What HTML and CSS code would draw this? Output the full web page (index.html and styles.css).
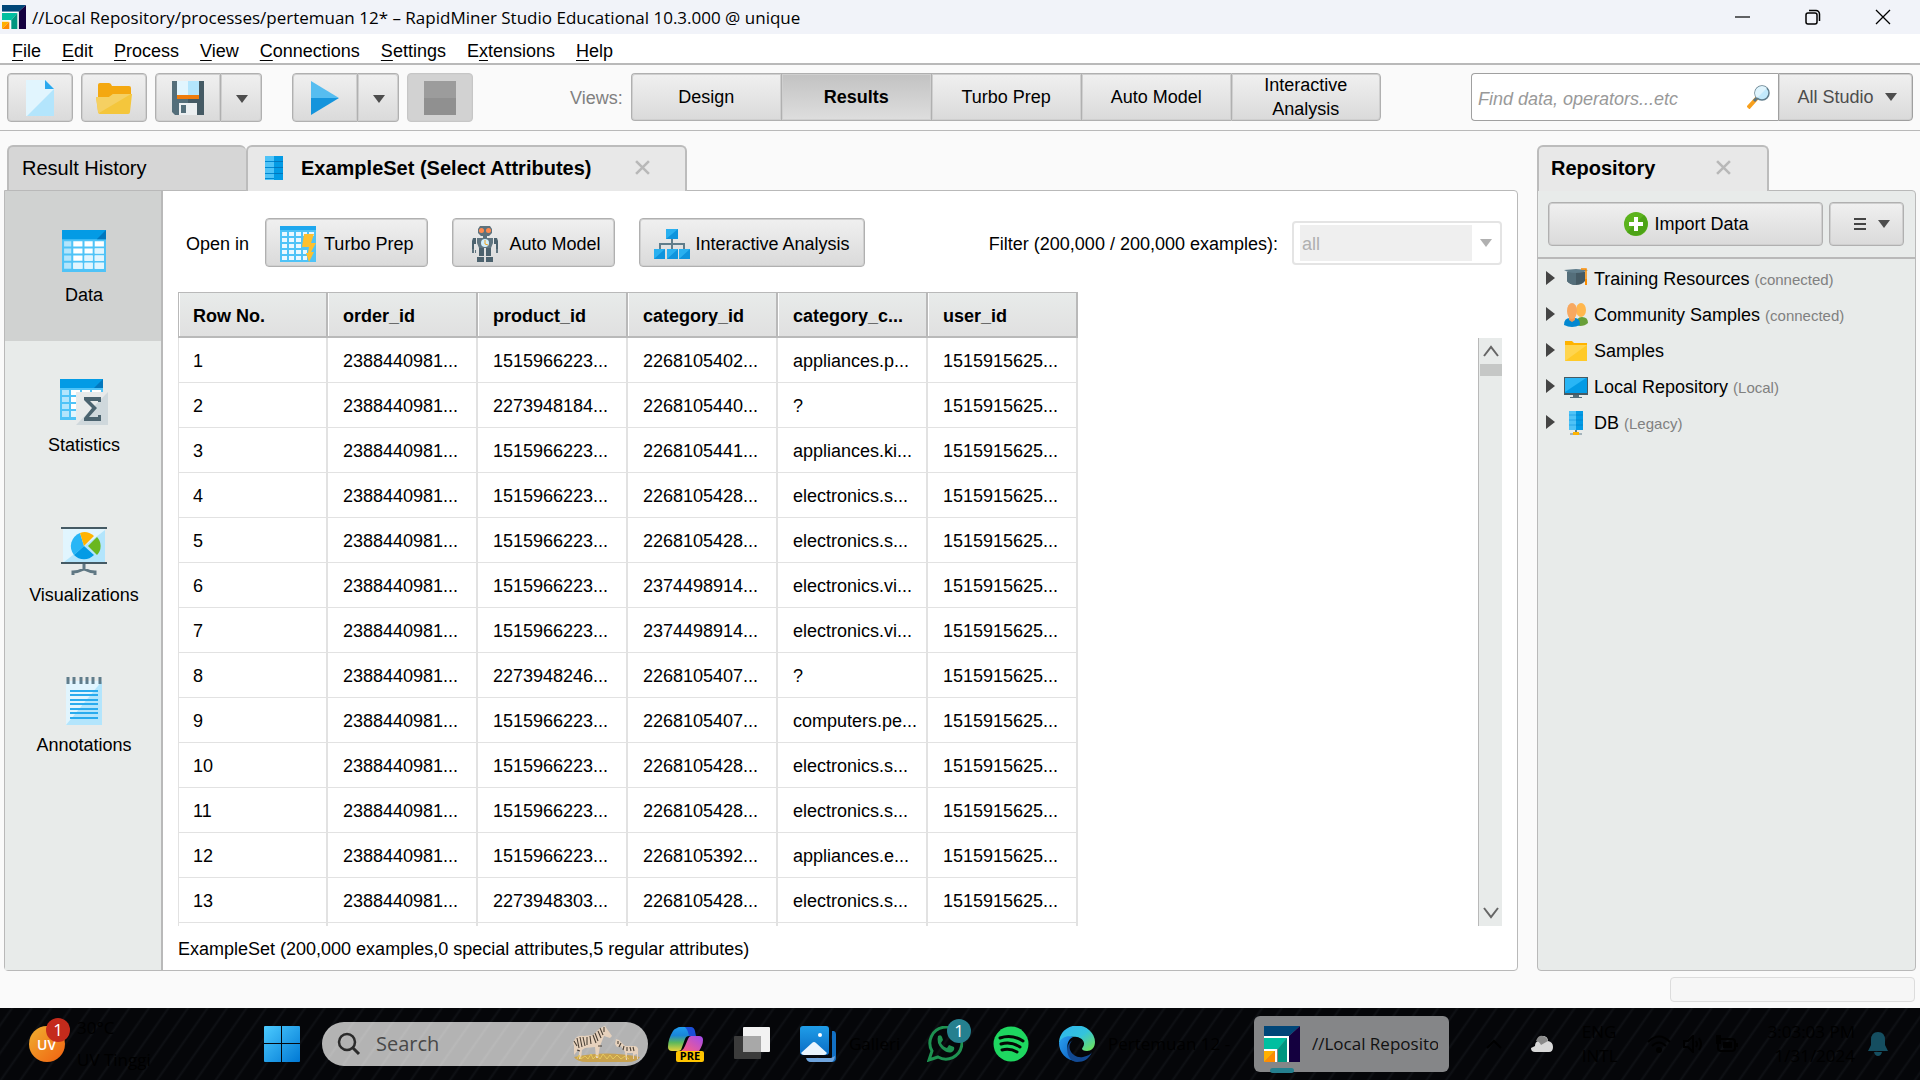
FILE: index.html
```html
<!DOCTYPE html>
<html lang="en">
<head>
    <meta charset="UTF-8">
    <meta name="viewport" content="width=device-width, initial-scale=1.0">
    <title>RapidMiner Studio Educational</title>
    <link rel="stylesheet" href="styles.css">
</head>
<body>

<!-- Shared shapes -->
<svg class="defs" width="0" height="0" aria-hidden="true">
    <defs>
        <linearGradient id="winGrad" x1="0" y1="0" x2="1" y2="1">
            <stop offset="0" stop-color="#4ccbff"/>
            <stop offset="1" stop-color="#0078d4"/>
        </linearGradient>
        <linearGradient id="copLeft" x1="0" y1="0" x2="0" y2="1">
            <stop offset="0" stop-color="#1f9cf0"/>
            <stop offset="0.35" stop-color="#1a86d8"/>
            <stop offset="0.65" stop-color="#5cb85c"/>
            <stop offset="1" stop-color="#e8d33a"/>
        </linearGradient>
        <linearGradient id="copRight" x1="1" y1="0" x2="0" y2="1">
            <stop offset="0" stop-color="#a14bf0"/>
            <stop offset="1" stop-color="#ff5f7e"/>
        </linearGradient>
        <linearGradient id="uvGrad" x1="0" y1="0" x2="1" y2="1">
            <stop offset="0" stop-color="#f0b030"/>
            <stop offset="1" stop-color="#f06010"/>
        </linearGradient>
        <linearGradient id="edgeTop" x1="0" y1="0" x2="1" y2="1">
            <stop offset="0" stop-color="#2fb4f0"/>
            <stop offset="0.5" stop-color="#33c3dd"/>
            <stop offset="1" stop-color="#76e64a"/>
        </linearGradient>
        <linearGradient id="edgeLow" x1="0" y1="0" x2="1" y2="1">
            <stop offset="0" stop-color="#2aa0f0"/>
            <stop offset="1" stop-color="#0b5cc0"/>
        </linearGradient>
        <linearGradient id="photoGrad" x1="0" y1="0" x2="0" y2="1">
            <stop offset="0" stop-color="#1f9de8"/>
            <stop offset="1" stop-color="#0a6cc4"/>
        </linearGradient>
        <symbol id="logo" viewBox="0 0 36 36">
            <path d="M0 0h36L25 10H0z" fill="#004678"/>
            <path d="M36 0v36H25V10z" fill="#14003f"/>
            <path d="M0 10h25v26h-2V12H0z" fill="#fff"/>
            <path d="M0 12h23l-9 11H0z" fill="#00bfa0"/>
            <path d="M23 12v24h-9V23z" fill="#009680"/>
            <path d="M0 23h13v13h-2V25H0z" fill="#fff"/>
            <path d="M0 25h11L0 36z" fill="#ffb000"/>
            <path d="M11 25v11H0z" fill="#ff8a00"/>
        </symbol>
        <symbol id="close" viewBox="0 0 14 14">
            <path d="M1 1l12 12M13 1L1 13" stroke="#b8b8b8" stroke-width="2.4" fill="none"/>
        </symbol>
        <symbol id="grid" viewBox="0 0 43 41">
            <path d="M0 1h43v40H0z" fill="#4fc3f7"/>
            <path d="M0 0h43v9H0z" fill="#039be5"/>
            <path d="M43 0v9h-9z" fill="#0277bd"/>
            <path d="M2 11h7v5H2zM2 18h7v5H2zM2 25h7v5H2zM2 32h7v6H2z" fill="#b3e5fc"/>
            <path d="M11 11h9v5h-9zM22 11h8v5h-8zM32 11h9v5h-9zM11 18h9v5h-9zM22 18h8v5h-8zM32 18h9v5h-9zM11 25h9v5h-9zM22 25h8v5h-8zM32 25h9v5h-9zM11 32h9v6h-9zM22 32h8v6h-8zM32 32h9v6h-9z" fill="#fff"/>
            <path d="M32 18h9v5h-9zM22 25h8v5h-8zM32 25h9v5h-9zM11 32h9v6h-9zM22 32h8v6h-8zM32 32h9v6h-9z" fill="#e1f5fe"/>
        </symbol>
    </defs>
</svg>

<header class="titlebar">
    <svg class="title-logo"><use href="#logo"/></svg>
    <h1>//Local Repository/processes/pertemuan 12* – RapidMiner Studio Educational 10.3.000 @ unique</h1>
    <div class="window-controls">
        <button type="button" aria-label="Minimize"><svg width="16" height="16" viewBox="0 0 16 16"><path d="M0 8h15" stroke="#000" stroke-width="1.2"/></svg></button>
        <button type="button" aria-label="Restore"><svg width="16" height="16" viewBox="0 0 16 16" fill="none" stroke="#000" stroke-width="1.5"><rect x="1" y="4" width="11" height="11" rx="2"/><path d="M4 1.500h7a3.500 3.500 0 0 1 3.500 3.500v7"/></svg></button>
        <button type="button" aria-label="Close"><svg width="16" height="16" viewBox="0 0 16 16"><path d="M1 1l14 14M15 1L1 15" stroke="#000" stroke-width="1.3"/></svg></button>
    </div>
</header>

<nav class="menubar">
    <a href="#"><u>F</u>ile</a>
    <a href="#"><u>E</u>dit</a>
    <a href="#"><u>P</u>rocess</a>
    <a href="#"><u>V</u>iew</a>
    <a href="#"><u>C</u>onnections</a>
    <a href="#"><u>S</u>ettings</a>
    <a href="#">E<u>x</u>tensions</a>
    <a href="#"><u>H</u>elp</a>
</nav>

<div class="toolbar">
    <div class="tools">
        <button type="button" class="btn tool" aria-label="New process">
            <svg width="28" height="36" viewBox="0 0 28 36"><path d="M0 0h19l9 9v27H0z" fill="#b3e5fc"/><path d="M0 0h19l9 9L1 36H0z" fill="#e1f5fe"/><path d="M19 0v9h9z" fill="#29a8ee"/></svg>
        </button>
        <button type="button" class="btn tool" aria-label="Open process">
            <svg width="36" height="32" viewBox="0 0 36 32"><path d="M2 3q0-2 2-2h9q2 0 3 3h17q2 0 2 2v12H2z" fill="#f4a810"/><path d="M0 15h13l4-3h19l-2 18q0 2-2 2H4q-2 0-2-2z" fill="#f4c63c"/><path d="M0 15h13l4-3h18L3 31q-1 0-1-2z" fill="#f5d062"/></svg>
        </button>
        <div class="split">
            <button type="button" class="btn tool" aria-label="Save process">
                <svg width="32" height="34" viewBox="0 0 32 34"><path d="M0 0h32v34H3l-3-3z" fill="#546e7a"/><path d="M16 0h16v34H16z" fill="#455a64"/><path d="M5 0h22v14H5z" fill="#e1f5fe"/><path d="M16 0h11v14H16z" fill="#b3e5fc"/><path d="M5 14h22v4H5z" fill="#ef7c0c"/><path d="M7 22h18v12H7z" fill="#eceff1"/><path d="M9 24h5v8H9z" fill="#546e7a"/></svg>
            </button>
            <button type="button" class="btn drop" aria-label="Save options"><span class="caret"></span></button>
        </div>
        <div class="split run">
            <button type="button" class="btn tool" aria-label="Run">
                <svg width="28" height="34" viewBox="0 0 28 34"><path d="M0 0l28 17H0z" fill="#56bdf0"/><path d="M0 34l28-17H0z" fill="#1494dc"/></svg>
            </button>
            <button type="button" class="btn drop" aria-label="Run options"><span class="caret"></span></button>
        </div>
        <button type="button" class="btn tool stop" aria-label="Stop" disabled>
            <svg width="32" height="34" viewBox="0 0 32 34"><path d="M0 0h32v17H0z" fill="#9c9c9c"/><path d="M0 17h32v17H0z" fill="#909090"/></svg>
        </button>
    </div>

    <div class="views">
        <span class="views-label">Views:</span>
        <div class="view-group">
            <button type="button" class="btn view">Design</button>
            <button type="button" class="btn view current">Results</button>
            <button type="button" class="btn view">Turbo Prep</button>
            <button type="button" class="btn view">Auto Model</button>
            <button type="button" class="btn view">Interactive Analysis</button>
        </div>
    </div>

    <div class="finder">
        <label class="find-box">
            <input type="search" placeholder="Find data, operators...etc" aria-label="Find data, operators">
            <svg width="24" height="24" viewBox="0 0 24 24"><path d="M1 23L10 13" stroke="#f8a01c" stroke-width="4"/><path d="M7 16l4-4" stroke="#5f7682" stroke-width="3"/><circle cx="15" cy="8" r="7" fill="#c3eafc" stroke="#607d8b" stroke-width="1.500"/><path d="M20 3L10 13a7 7 0 0 1 10-10z" fill="#dff4fd"/></svg>
        </label>
        <button type="button" class="btn studio">All Studio <span class="caret"></span></button>
    </div>
</div>

<main class="workspace">
    <section class="results">
        <div class="tabs">
            <div class="tab history">Result History</div>
            <div class="tab active example">
                <svg width="18" height="24" viewBox="0 0 18 24"><path d="M0 0h9v24H0z" fill="#4fc3f7"/><path d="M9 0h9v24H9z" fill="#039be5"/><path d="M0 5h9v1H0zM0 11h9v1H0zM0 17h9v1H0zM0 22h9v1H0z" fill="#0288d1"/><path d="M9 5h9v1H9zM9 11h9v1H9zM9 17h9v1H9z" fill="#0277bd"/></svg>
                <span>ExampleSet (Select Attributes)</span>
                <button type="button" class="tab-close" aria-label="Close tab"><svg><use href="#close"/></svg></button>
            </div>
        </div>

        <div class="panel results-panel">
            <nav class="sidebar">
                <button type="button" class="side-item selected">
                    <svg width="44" height="48" viewBox="0 -3 43 47"><use href="#grid" width="43" height="41"/></svg>
                    Data
                </button>
                <button type="button" class="side-item">
                    <svg width="48" height="48" viewBox="0 -2 48 48"><use href="#grid" width="43" height="41"/><path d="M16 13h32v33H16z" fill="#e8eaea"/><path d="M48 13v33H16z" fill="#cfd8dc"/><path d="M24 18h17v5h-3v-1h-8l7 7-8 9h9v-2h3v6H24v-3l8-10-8-8z" fill="#4b636f"/></svg>
                    Statistics
                </button>
                <button type="button" class="side-item">
                    <svg width="46" height="48" viewBox="0 0 46 48"><path d="M2 2h42v33H2z" fill="#e1f5fe"/><path d="M44 3v32H3z" fill="#b3e5fc"/><path d="M0 0h46v2H0zM0 35h46v2H0z" fill="#455a64"/><path d="M23 37v6M23 42q-6 3-11 3v3M23 42q6 3 11 3v3" stroke="#5f7783" stroke-width="3" fill="none"/><path d="M23 19l-4-13a14 14 0 0 0-6 22z" fill="#29b6f6"/><path d="M23 19L13 28a14 14 0 0 0 20 0z" fill="#039be5"/><path d="M23 19L19 6q7-3 14 3z" fill="#ffb300"/><path d="M27 19l9-9a13 13 0 0 1 0 18z" fill="#6ab71f"/></svg>
                    Visualizations
                </button>
                <button type="button" class="side-item">
                    <svg width="36" height="48" viewBox="0 0 36 48"><path d="M0 4h36v44H0z" fill="#e1f5fe"/><path d="M36 4v44H0z" fill="#b3e5fc"/><path d="M2 0v7M8 0v7M15 0v7M21 0v7M27 0v7M34 0v7" stroke="#607d8b" stroke-width="3"/><path d="M4 14h28M4 18h28M4 23h28M4 27h28M4 32h28M4 36h28M4 41h28" stroke="#29abee" stroke-width="2"/></svg>
                    Annotations
                </button>
            </nav>

            <div class="data-view">
                <div class="openbar">
                    <span>Open in</span>
                    <button type="button" class="btn open-btn">
                        <svg width="36" height="36" viewBox="0 0 36 36"><path d="M0 0h36v36H0z" fill="#4fc3f7"/><path d="M0 0h36v4H0z" fill="#1ea7ee"/><path d="M2 6h5v4H2zM9 6h5v4H9zM16 6h5v4h-5zM23 6h4v4h-4zM29 6h5v4h-5zM2 12h5v4H2zM9 12h5v4H9zM16 12h5v4h-5zM2 18h5v4H2zM9 18h5v4H9zM16 18h5v4h-5zM2 24h5v4H2zM9 24h5v4H9zM16 24h5v4h-5zM23 24h4v4h-4zM2 30h5v4H2zM9 30h5v4H9zM16 30h5v4h-5zM23 30h4v4h-4z" fill="#eaf8ff"/><path d="M24 8h10l-3 9h5l-5 9h3l-5 10-3-9h2l1-6h-7z" fill="#fdc02f"/></svg>
                        Turbo Prep
                    </button>
                    <button type="button" class="btn open-btn robot">
                        <svg width="26" height="36" viewBox="0 0 26 36"><path d="M8 0h10l2 3v4l-3 3H9L6 7V3zM11 9h4v3h-4z" fill="#5d727d"/><path d="M5 12h16v5l-2 5H7l-2-5z" fill="#607580"/><path d="M1 12h3v6H2v6H0v-9zM25 12h-3v6h2v6h2v-9zM7 22h5v8H7zM14 22h5v8h-5zM5 31h7v5H5zM14 31h7v5h-7z" fill="#4c626e"/><path d="M0 23h2v4H0zM3 24h1v3H3zM24 23h2v4h-2z" fill="#607580"/><circle cx="9.500" cy="4.500" r="2.500" fill="#ff8a50"/><circle cx="16.500" cy="4.500" r="2.500" fill="#ff8a50"/><circle cx="13" cy="17" r="4" fill="#cfeefc"/><path d="M13 14v4l3 1" stroke="#f4a21c" fill="none"/></svg>
                        Auto Model
                    </button>
                    <button type="button" class="btn open-btn analysis">
                        <svg width="36" height="30" viewBox="0 0 36 30"><path d="M18 10v11M6 21v-6h24v6" stroke="#607d8b" stroke-width="2" fill="none"/><path d="M12 0h12v10H12zM0 20h11v10H0zM13 20h11v10H13zM25 20h11v10H25z" fill="#29b0f0"/><path d="M24 0v10H12zM11 20v10H0zM24 20v10H13zM36 20v10H25z" fill="#0f94dd"/></svg>
                        Interactive Analysis
                    </button>
                    <label class="filter-label" for="filter">Filter (200,000 / 200,000 examples):</label>
                    <div class="filter">
                        <select id="filter" disabled>
                            <option>all</option>
                        </select>
                        <span class="caret"></span>
                    </div>
                </div>

                <div class="table-area">
                    <div class="table-clip">
                        <table>
                            <thead>
                                <tr><th>Row No.</th><th>order_id</th><th>product_id</th><th>category_id</th><th>category_c...</th><th>user_id</th></tr>
                            </thead>
                            <tbody>
                                <tr><td>1</td><td>2388440981...</td><td>1515966223...</td><td>2268105402...</td><td>appliances.p...</td><td>1515915625...</td></tr>
                                <tr><td>2</td><td>2388440981...</td><td>2273948184...</td><td>2268105440...</td><td>?</td><td>1515915625...</td></tr>
                                <tr><td>3</td><td>2388440981...</td><td>1515966223...</td><td>2268105441...</td><td>appliances.ki...</td><td>1515915625...</td></tr>
                                <tr><td>4</td><td>2388440981...</td><td>1515966223...</td><td>2268105428...</td><td>electronics.s...</td><td>1515915625...</td></tr>
                                <tr><td>5</td><td>2388440981...</td><td>1515966223...</td><td>2268105428...</td><td>electronics.s...</td><td>1515915625...</td></tr>
                                <tr><td>6</td><td>2388440981...</td><td>1515966223...</td><td>2374498914...</td><td>electronics.vi...</td><td>1515915625...</td></tr>
                                <tr><td>7</td><td>2388440981...</td><td>1515966223...</td><td>2374498914...</td><td>electronics.vi...</td><td>1515915625...</td></tr>
                                <tr><td>8</td><td>2388440981...</td><td>2273948246...</td><td>2268105407...</td><td>?</td><td>1515915625...</td></tr>
                                <tr><td>9</td><td>2388440981...</td><td>1515966223...</td><td>2268105407...</td><td>computers.pe...</td><td>1515915625...</td></tr>
                                <tr><td>10</td><td>2388440981...</td><td>1515966223...</td><td>2268105428...</td><td>electronics.s...</td><td>1515915625...</td></tr>
                                <tr><td>11</td><td>2388440981...</td><td>1515966223...</td><td>2268105428...</td><td>electronics.s...</td><td>1515915625...</td></tr>
                                <tr><td>12</td><td>2388440981...</td><td>1515966223...</td><td>2268105392...</td><td>appliances.e...</td><td>1515915625...</td></tr>
                                <tr><td>13</td><td>2388440981...</td><td>2273948303...</td><td>2268105428...</td><td>electronics.s...</td><td>1515915625...</td></tr>
                                <tr><td></td><td></td><td></td><td></td><td></td><td></td></tr>
                            </tbody>
                        </table>
                    </div>
                    <div class="scrollbar">
                        <button type="button" aria-label="Scroll up"><svg width="16" height="12" viewBox="0 0 16 12"><path d="M1 11l7-9 7 9" fill="none" stroke="#666" stroke-width="2"/></svg></button>
                        <div class="thumb"></div>
                        <button type="button" class="down" aria-label="Scroll down"><svg width="16" height="12" viewBox="0 0 16 12"><path d="M1 1l7 9 7-9" fill="none" stroke="#666" stroke-width="2"/></svg></button>
                    </div>
                </div>

                <p class="summary">ExampleSet (200,000 examples,0 special attributes,5 regular attributes)</p>
            </div>
        </div>
    </section>

    <aside class="repository">
        <div class="tabs">
            <div class="tab active repo-tab">
                <span>Repository</span>
                <button type="button" class="tab-close" aria-label="Close tab"><svg><use href="#close"/></svg></button>
            </div>
        </div>
        <div class="panel repo-panel">
            <div class="repo-actions">
                <button type="button" class="btn import">
                    <svg width="24" height="24" viewBox="0 0 24 24"><circle cx="12" cy="12" r="12" fill="#5cb31d"/><path d="M20 3A12 12 0 0 1 3 20z" fill="#4ca316"/><path d="M12 5v14M5 12h14" stroke="#fff" stroke-width="4"/></svg>
                    Import Data
                </button>
                <button type="button" class="btn repo-menu" aria-label="Repository menu">
                    <svg width="12" height="12" viewBox="0 0 12 12"><path d="M0 1h12M0 6h12M0 11h12" stroke="#444" stroke-width="2"/></svg>
                    <span class="caret"></span>
                </button>
            </div>
            <ul class="tree">
                <li><span class="arrow"></span>
                    <svg width="24" height="24" viewBox="0 0 24 24"><path d="M3 5h18v9q-3 4-9 4t-9-4z" fill="#455a64"/><path d="M3 5h9v13q-6 0-9-4z" fill="#546e7a"/><path d="M0 3l12-1 12 1-4 2q-8 2-16 0z" fill="#607d8b"/><path d="M17 2h5v10" stroke="#fb8c00" stroke-width="1.500" fill="none"/><path d="M21 12h2v6h-2z" fill="#fb8c00"/></svg>
                    <span class="name">Training Resources</span><span class="state">(connected)</span></li>
                <li><span class="arrow"></span>
                    <svg width="24" height="24" viewBox="0 0 24 24"><path d="M12 22q0-8 6-8t6 6q-3 3-8 3z" fill="#689f38"/><ellipse cx="17" cy="7" rx="5" ry="7" fill="#ffb74d"/><path d="M0 22q0-7 6-7h5q5 0 5 7-8 4-16 0z" fill="#0288d1"/><path d="M5 13h6v4l-3 2-3-2z" fill="#ef9a56"/><ellipse cx="8" cy="8" rx="5" ry="8" fill="#f7a860"/></svg>
                    <span class="name">Community Samples</span><span class="state">(connected)</span></li>
                <li><span class="arrow"></span>
                    <svg width="24" height="24" viewBox="0 0 24 24"><path d="M1 2h7l2 2h13v18H1z" fill="#ffb300"/><path d="M1 6h22v16H1z" fill="#ffca28"/><path d="M1 6h22L1 22z" fill="#ffd54f"/></svg>
                    <span class="name">Samples</span></li>
                <li><span class="arrow"></span>
                    <svg width="24" height="24" viewBox="0 0 24 24"><path d="M0 2h24v18H0z" fill="#455a64"/><path d="M1 3h22v15H1z" fill="#039be5"/><path d="M1 3h21L1 17z" fill="#29b6f6"/><path d="M9 20h6v2h3v1H6v-1h3z" fill="#546e7a"/></svg>
                    <span class="name">Local Repository</span><span class="state">(Local)</span></li>
                <li><span class="arrow"></span>
                    <svg width="24" height="24" viewBox="0 0 24 24"><path d="M5 0h7v19H5z" fill="#4fc3f7"/><path d="M12 0h7v19h-7z" fill="#039be5"/><path d="M5 4h7M5 9h7M5 14h7" stroke="#29a6e8"/><path d="M12 4h7M12 9h7M12 14h7" stroke="#0288d1"/><path d="M12 19v3" stroke="#607d8b" stroke-width="2"/><path d="M6 23h12" stroke="#607d8b"/><path d="M9 21h6v3H9z" fill="#ffb300"/></svg>
                    <span class="name">DB</span><span class="state">(Legacy)</span></li>
            </ul>
        </div>
    </aside>
</main>

<div class="statusbar"><div class="progress"></div></div>

<footer class="taskbar">
    <button type="button" class="weather">
        <span class="uv">
            <svg width="36" height="36" viewBox="0 0 36 36"><circle cx="18" cy="18" r="18" fill="url(#uvGrad)"/></svg>
            <span class="uv-text">UV</span>
            <span class="badge red">1</span>
        </span>
        <span class="dim">30°C<br>UV Tinggi</span>
    </button>

    <div class="apps">
        <button type="button" aria-label="Start">
            <svg width="36" height="36" viewBox="0 0 36 36" fill="url(#winGrad)"><path d="M0 1q0-1 1-1h34q1 0 1 1v34q0 1-1 1H1q-1 0-1-1z"/><path d="M17 0h1v36h-1zM0 17h36v1H0z" fill="#04080e"/></svg>
        </button>
        <label class="search">
            <svg width="24" height="24" viewBox="0 0 24 24" fill="none" stroke="#2b2b2b" stroke-width="2.500"><circle cx="10" cy="10" r="8"/><path d="M16 16l6 6" stroke-width="3"/></svg>
            <input type="search" placeholder="Search" aria-label="Search">
            <svg width="70" height="36" viewBox="0 0 70 36"><path d="M3 31q32-7 66 0-3 5-13 5H16Q6 36 3 31z" fill="#c9a24e"/><path d="M4 13q3-4 9-3l9-1 7-7 5-2 2 3 5 7-2 2-6-2-4 10-2 12h-2l-1-11-10 1-3 2-1 9H8V23l-5 6V19q-2-2 1-6z" fill="#e7d2bd"/><path d="M45 13l3 1 6 6h10q4 1 3 6v7h-1v-5l-3 1v4h-1v-6h-6v7h-1l-1-8-4-6-4 1-2-3z" fill="#e7d2bd"/><path d="M6 12l2 10M9 11l2 10M12 11l2 9M16 11v8M19 10l1 8M22 9l3 8M24 7l3 8M27 5l3 7M29 2l3 7M33 1v5M3 15l3 5M6 24l3 1M27 20h4M50 17l-2 4M53 20l-1 4M56 21v4M59 21l1 4M62 21l1 4M47 15v3" stroke="#4a4036" stroke-width="1.100" fill="none"/><path d="M6 33l2-4 2 4 4-3 3 3 3-5 2 5 4-4 3 4 3-5 4 5 3-4 3 4 4-4 4 4 4-3 4 3" stroke="#e6c95c" fill="none"/></svg>
        </label>
        <button type="button" aria-label="Copilot">
            <svg width="36" height="36" viewBox="0 0 36 36"><path d="M9 2q1-1 3-1h9q3 0 4 3l2 6h-6q-3 0-4 3l-4 11q-1 1-3 1H4q-4 0-4-4 0-8 5-16 1-2 4-3z" fill="url(#copLeft)"/><path d="M19 1h4q3 0 4 4l1 5h-7q-1-6-4-9z" fill="#1c4fd8"/><path d="M23 10h8q4 0 4 4 0 5-4 11H13q3-2 4-5l3-7q1-3 3-3z" fill="url(#copRight)"/><rect x="8" y="25" width="28" height="11" rx="2" fill="#ffc400"/><text x="22" y="34" class="pre">PRE</text></svg>
        </button>
        <button type="button" aria-label="Task view">
            <svg width="36" height="36" viewBox="0 0 36 36"><rect x="0" y="10" width="27" height="23" rx="1" fill="#3b3b3b"/><rect x="9" y="1" width="27" height="25" rx="1" fill="#f2f2f2"/><path d="M9 10h18v16H9z" fill="#a8a8a8"/></svg>
        </button>
        <button type="button" class="app-photos">
            <svg width="36" height="36" viewBox="0 0 36 36"><path d="M8 32h24V5l2 0q2 1 2 3v24q0 4-4 4H11q-3 0-4-3z" fill="#1270c4"/><path d="M6 32h25l4-2q-1 6-4 6H11q-4 0-5-4z" fill="#6fa4dd"/><rect width="31" height="31" rx="2" fill="#060a12"/><rect width="29" height="29" rx="3" fill="url(#photoGrad)"/><path d="M1 27l11-10q2-2 4 0l11 10q-1 2-3 2H4q-2 0-3-2z" fill="#eaf4fd"/><circle cx="20" cy="9" r="2" fill="#fff"/></svg>
            <span class="dim">Galleri</span>
        </button>
        <button type="button" class="app-wa" aria-label="WhatsApp">
            <svg width="36" height="36" viewBox="0 0 36 36"><path d="M2 34l3-9a16 16 0 1 1 6 6z" fill="none" stroke="#1d9150" stroke-width="3"/><path d="M11 10q3-2 4 1l1 3-2 3q2 4 6 5l2-3 5 2q1 3-2 5-4 2-10-3-6-6-4-13z" fill="#1d9150"/></svg>
            <span class="badge teal">1</span>
        </button>
        <button type="button" aria-label="Spotify">
            <svg width="36" height="36" viewBox="0 0 36 36"><circle cx="18" cy="18" r="17.500" fill="#1ed760"/><path d="M7 12q12-4 23 3M8 18q10-3 19 3M9 24q8-2 15 2" fill="none" stroke="#050805" stroke-width="3" stroke-linecap="round"/></svg>
        </button>
        <button type="button" class="app-edge">
            <svg width="36" height="36" viewBox="0 0 36 36"><path d="M0 17a18 17 0 0 1 36-1c0 6-4 9-8 9-5 0-6-2-4-4 3-5-1-9-6-10-8-1-15 2-18 6z" fill="url(#edgeTop)"/><path d="M0 17c2-6 9-8 14-6-7 3-9 16 3 24A18 18 0 0 1 0 17z" fill="url(#edgeLow)"/><path d="M14 14c-8 6-1 19 10 17 5-1 8-3 9-5-3 7-8 10-15 10C7 35 5 18 14 14z" fill="#124a94"/></svg>
            <span class="dim">Pertemuan 12 -</span>
        </button>
        <button type="button" class="app-current">
            <svg width="36" height="36"><use href="#logo"/></svg>
            <span>//Local Repository</span>
        </button>
    </div>

    <div class="tray dim">
        <svg width="16" height="10" viewBox="0 0 16 10"><path d="M1 9l7-7 7 7" fill="none" stroke="#000" stroke-width="2"/></svg>
        <svg width="22" height="20" viewBox="0 0 22 20"><path d="M4 12q0-4 3-5 1-5 6-5 4 1 4 5 5 1 5 6 0 5-4 5H4q-4 0-4-4z" fill="#d8d8d8"/><path d="M5 7Q7 1 12 2q4 1 5 5l-7 4q-2-4-5-4z" fill="#8a8a8a"/></svg>
        <span>ENG<br>INTL</span>
        <div class="sys">
            <svg width="24" height="18" viewBox="0 0 24 18" fill="none" stroke="#000" stroke-width="2"><path d="M1 7q11-11 22 0M5 11q7-7 14 0"/><circle cx="12" cy="15" r="2" fill="#000"/></svg>
            <svg width="20" height="18" viewBox="0 0 20 18" fill="none" stroke="#000" stroke-width="2"><path d="M1 6h4l5-5v16l-5-5H1zM13 6q2 3 0 6M16 3q4 6 0 12"/></svg>
            <svg width="24" height="18" viewBox="0 0 24 18"><rect x="3" y="4" width="17" height="12" rx="3" fill="none" stroke="#000" stroke-width="2"/><path d="M8 7h9v6H8zM21 8h2v4h-2zM1 0h5v9H1z"/></svg>
        </div>
        <time>3:03:03 PM<br>1/31/2024</time>
        <svg width="20" height="24" viewBox="0 0 20 24"><path d="M10 0q7 0 7 8v5l3 6H0l3-6V8q0-8 7-8zM6 20h8q-1 4-4 4t-4-4z" fill="#154e60"/></svg>
    </div>
</footer>

</body>
</html>
```

FILE: styles.css
```css
* {
    box-sizing: border-box;
}

body {
    display: flex;
    flex-direction: column;
    height: 100vh;
    margin: 0;
    overflow: hidden;
    background-color: #fafafa;
    color: #000;
    font-family: "Liberation Sans", Arial, sans-serif;
    font-size: 18px;
    line-height: 24px;
}

button,
input,
select {
    font: inherit;
    color: inherit;
}

button {
    padding: 0;
    border: none;
    background: none;
}

svg {
    flex-shrink: 0;
}

.defs {
    position: absolute;
}

/* Title bar and menu */
.titlebar {
    display: flex;
    align-items: center;
    height: 34px;
    padding-left: 2px;
    background-color: #f1f3f9;
    flex-shrink: 0;
}

.title-logo {
    width: 24px;
    height: 24px;
}

.titlebar h1 {
    flex: 1;
    margin: 0 0 0 6px;
    padding-top: 2px;
    font-family: "Open Sans", "Noto Sans", sans-serif;
    font-size: 17px;
    font-weight: normal;
    white-space: nowrap;
}

.window-controls {
    display: flex;
    padding-right: 2px;
}

.window-controls button {
    display: flex;
    align-items: center;
    justify-content: center;
    width: 70px;
    height: 34px;
}

.menubar {
    display: flex;
    align-items: center;
    gap: 21px;
    height: 31px;
    padding: 4px 12px 0;
    border-bottom: 2px solid #b9b9b9;
    background-color: #fff;
    flex-shrink: 0;
}

.menubar a {
    color: #000;
    text-decoration: none;
}

.menubar u {
    text-underline-offset: 3px;
}

/* Toolbar */
.toolbar {
    display: flex;
    align-items: flex-start;
    height: 66px;
    padding: 8px 7px 0;
    border-bottom: 1px solid #b9b9b9;
    flex-shrink: 0;
}

.btn {
    display: flex;
    align-items: center;
    justify-content: center;
    border: 1px solid #b0b0b0;
    border-radius: 4px;
    background: linear-gradient(#f0f0f0, #dadada);
    box-shadow: 0 0 0 1px #cfcfcf inset;
}

.caret {
    border: 6px solid transparent;
    border-top: 8px solid #4d4d4d;
    border-bottom: none;
}

.tools {
    display: flex;
    gap: 8px;
}

.tool {
    width: 66px;
    height: 49px;
}

.split {
    display: flex;
}

.split .tool {
    border-radius: 4px 0 0 4px;
}

.drop {
    width: 41px;
    padding: 2px 0 0 2px;
    border-left: none;
    border-radius: 0 4px 4px 0;
}

.run {
    margin-left: 22px;
}

.stop {
    background: #d2d2d2;
    border-color: #c6c6c6;
}

.views {
    display: flex;
    align-items: center;
    gap: 8px;
    margin-left: 97px;
}

.views-label {
    padding-top: 2px;
    color: #808080;
}

.view-group {
    display: flex;
}

.view {
    width: 150px;
    height: 48px;
    padding: 0 24px;
    border-right: none;
    border-radius: 0;
}

.view:first-child {
    border-radius: 4px 0 0 4px;
}

.view:last-child {
    border-right: 1px solid #b0b0b0;
    border-radius: 0 4px 4px 0;
}

.view.current {
    background: linear-gradient(#c2c2c2, #dedede);
    font-weight: bold;
}

.finder {
    display: flex;
    margin-left: auto;
}

.find-box {
    display: flex;
    align-items: center;
    width: 307px;
    height: 48px;
    padding: 0 7px 0 6px;
    border: 1px solid #a0a0a0;
    border-right: none;
    border-radius: 4px 0 0 4px;
    background-color: #fff;
}

.find-box input {
    flex: 1;
    min-width: 0;
    padding: 3px 0 0;
    border: none;
    background: none;
    font-style: italic;
}

.find-box input::placeholder {
    color: #999;
}

.studio {
    gap: 11px;
    width: 135px;
    height: 48px;
    padding-left: 3px;
    border-color: #a0a0a0;
    border-radius: 0 4px 4px 0;
    color: #4d4d4d;
}

/* Panels */
.workspace {
    display: flex;
    flex: 1;
    gap: 19px;
    min-height: 0;
    padding: 14px 4px 0;
}

.results {
    display: flex;
    flex: 1;
    flex-direction: column;
    min-width: 0;
}

.repository {
    display: flex;
    flex: 0 0 379px;
    flex-direction: column;
}

.tabs {
    display: flex;
    height: 45px;
    flex-shrink: 0;
}

.results .tabs {
    padding-left: 3px;
}

.tab {
    display: flex;
    align-items: center;
    padding-bottom: 2px;
    border: 2px solid #bcbcbc;
    border-bottom: none;
    border-radius: 6px 6px 0 0;
    background-color: #d6d6d6;
    font-size: 20px;
}

.tab.active {
    position: relative;
    z-index: 1;
    margin-bottom: -1px;
    padding-bottom: 3px;
    background-color: #e8e8e8;
    font-weight: bold;
}

.history {
    width: 239px;
    padding-left: 13px;
    border-right: none;
}

.example {
    width: 441px;
    gap: 18px;
    padding: 0 35px 0 17px;
}

.repo-tab {
    width: 232px;
    padding: 0 36px 0 12px;
}

.tab-close {
    display: flex;
    margin-left: auto;
}

.tab-close svg {
    width: 15px;
    height: 15px;
}

.panel {
    flex: 1;
    min-height: 0;
    border: 1px solid #b9b9b9;
    border-radius: 0 4px 4px 4px;
}

.results-panel {
    display: flex;
    background-color: #fff;
}

.sidebar {
    width: 158px;
    border-right: 2px solid #b9b9b9;
    background-color: #e8ebea;
    flex-shrink: 0;
}

.side-item {
    display: flex;
    flex-direction: column;
    align-items: center;
    gap: 8px;
    width: 100%;
    height: 150px;
    padding: 36px 0 0 2px;
}

.side-item.selected {
    background-color: #d0d2d1;
}

.data-view {
    display: flex;
    flex: 1;
    flex-direction: column;
    min-width: 0;
    padding: 27px 15px 0;
}

.openbar {
    display: flex;
    align-items: center;
    height: 49px;
    margin-bottom: 25px;
    padding-left: 8px;
    flex-shrink: 0;
}

.openbar > span,
.filter-label {
    padding-top: 2px;
}

.open-btn {
    gap: 8px;
    height: 49px;
    margin-right: 24px;
    padding: 2px 14px 0;
}

.openbar span + .open-btn {
    margin-left: 16px;
}

.robot {
    gap: 11px;
    padding-left: 19px;
    padding-right: 13px;
}

.analysis {
    gap: 6px;
}

.filter-label {
    margin-left: auto;
}

.filter {
    display: flex;
    align-items: center;
    width: 210px;
    height: 44px;
    margin-left: 14px;
    padding: 0 8px 0 6px;
    border: 2px solid #e4e4e4;
    border-radius: 4px;
}

.filter select {
    width: 172px;
    height: 36px;
    margin-right: auto;
    padding: 2px 2px 0;
    border: none;
    background-color: #efefef;
    color: #b0b0b0;
    opacity: 1;
    appearance: none;
}

.filter .caret {
    border-top-color: #b0b0b0;
}

.table-area {
    display: flex;
    flex: 1;
    justify-content: space-between;
    min-height: 0;
}

.table-clip {
    overflow: hidden;
}

table {
    width: 900px;
    table-layout: fixed;
    border-collapse: separate;
    border-spacing: 0;
}

th,
td {
    height: 45px;
    padding: 2px 0 0 15px;
    border-right: 2px solid #e2e2e2;
    border-bottom: 1px solid #e2e2e2;
    text-align: left;
    white-space: nowrap;
}

th {
    height: 46px;
    border-top: 1px solid #b9b9b9;
    border-right-color: #b9b9b9;
    border-bottom: 2px solid #b9b9b9;
    background: linear-gradient(#e8ebea, #e0e0e0);
    box-shadow: 1px 0 0 #fff inset;
}

th:first-child,
td:first-child {
    padding-left: 14px;
}

th:first-child {
    border-left: 1px solid #b9b9b9;
}

td:first-child {
    border-left: 1px solid #e2e2e2;
}

.scrollbar {
    display: flex;
    flex-direction: column;
    width: 24px;
    margin-top: 46px;
    border-left: 1px solid #b9b9b9;
    background-color: #e8ebea;
}

.scrollbar button {
    display: flex;
    align-items: center;
    justify-content: center;
    height: 26px;
}

.thumb {
    height: 12px;
    margin-left: 1px;
    background-color: #c5c7c6;
}

.scrollbar .down {
    margin-top: auto;
}

.summary {
    margin: 0;
    padding: 11px 0 9px;
}

/* Repository */
.repo-panel {
    background-color: #e8ebea;
}

.repo-actions {
    display: flex;
    gap: 6px;
    padding: 11px 11px 11px 10px;
    border-bottom: 2px solid #b9b9b9;
}

.import {
    flex: 1;
    gap: 6px;
    height: 44px;
    padding-left: 2px;
}

.repo-menu {
    gap: 12px;
    width: 75px;
    padding-left: 10px;
}

.tree {
    margin: 0;
    padding: 2px 0 0 8px;
    list-style: none;
}

.tree li {
    display: flex;
    align-items: center;
    height: 36px;
}

.arrow {
    margin: 0 9px 3px 0;
    border: 7px solid transparent;
    border-left: 9px solid #444;
    border-right: none;
}

.tree .name {
    margin: 0 5px 0 6px;
}

.state {
    padding-top: 2px;
    color: #808080;
    font-size: 15px;
}

.statusbar {
    display: flex;
    justify-content: flex-end;
    height: 37px;
    padding: 6px 5px;
    flex-shrink: 0;
}

.progress {
    width: 245px;
    height: 25px;
    border: 1px solid #dcdcdc;
    border-radius: 4px;
    background-color: #f6f6f6;
}

/* Taskbar */
.taskbar {
    display: flex;
    align-items: center;
    height: 72px;
    background: repeating-linear-gradient(125deg, #050609 0 8px, #0f1115 10px, #050609 12px 16px);
    font-family: "Open Sans", "Noto Sans", sans-serif;
    flex-shrink: 0;
}

.dim {
    color: #000;
    font-size: 17px;
    line-height: 32px;
}

.weather {
    display: flex;
    align-items: center;
    gap: 12px;
    width: 264px;
    padding-left: 29px;
    text-align: left;
}

.uv {
    position: relative;
    display: flex;
}

.uv-text {
    position: absolute;
    left: 8px;
    top: 7px;
    color: #fff;
    font-size: 14px;
    font-weight: 600;
}

.badge {
    position: absolute;
    width: 24px;
    height: 24px;
    border-radius: 50%;
    color: #fff;
    font-size: 17px;
    text-align: center;
}

.badge.red {
    left: 17px;
    top: -8px;
    background-color: #c42b1c;
}

.badge.teal {
    left: 20px;
    top: -7px;
    background-color: #25808f;
}

.apps {
    display: flex;
    align-items: center;
    gap: 30px;
}

.apps button {
    display: flex;
    align-items: center;
    position: relative;
}

.search {
    display: flex;
    align-items: center;
    width: 326px;
    height: 44px;
    margin: 0 -10px 0 -8px;
    padding: 0 7px 0 15px;
    border-radius: 22px;
    background: repeating-linear-gradient(125deg, #b3b3b3 0 8px, #b9b9b9 10px, #b3b3b3 12px 16px);
}

.search input {
    flex: 1;
    min-width: 0;
    padding: 0 0 0 15px;
    border: none;
    background: none;
    font-size: 20px;
}

.search input::placeholder {
    color: #484848;
}

.pre {
    fill: #000;
    font-size: 11px;
    font-weight: bold;
    text-anchor: middle;
}

.app-photos {
    gap: 13px;
    width: 97px;
}

.app-edge {
    gap: 13px;
    width: 165px;
    white-space: nowrap;
}

.app-current {
    gap: 12px;
    width: 195px;
    height: 56px;
    padding: 0 11px 0 10px;
    border-radius: 6px;
    background-color: #858688;
    color: #111;
}

.app-current span {
    overflow: hidden;
    font-size: 17px;
    white-space: nowrap;
}

.app-current::after {
    content: "";
    position: absolute;
    left: 16px;
    bottom: -1px;
    width: 24px;
    height: 5px;
    border-radius: 3px;
    background-color: #25808f;
}

.tray {
    display: flex;
    align-items: center;
    gap: 29px;
    margin-left: auto;
    padding-right: 32px;
    line-height: 24px;
}

.sys {
    display: flex;
    gap: 12px;
}

.tray time {
    text-align: right;
    margin-right: -16px;
}
```
